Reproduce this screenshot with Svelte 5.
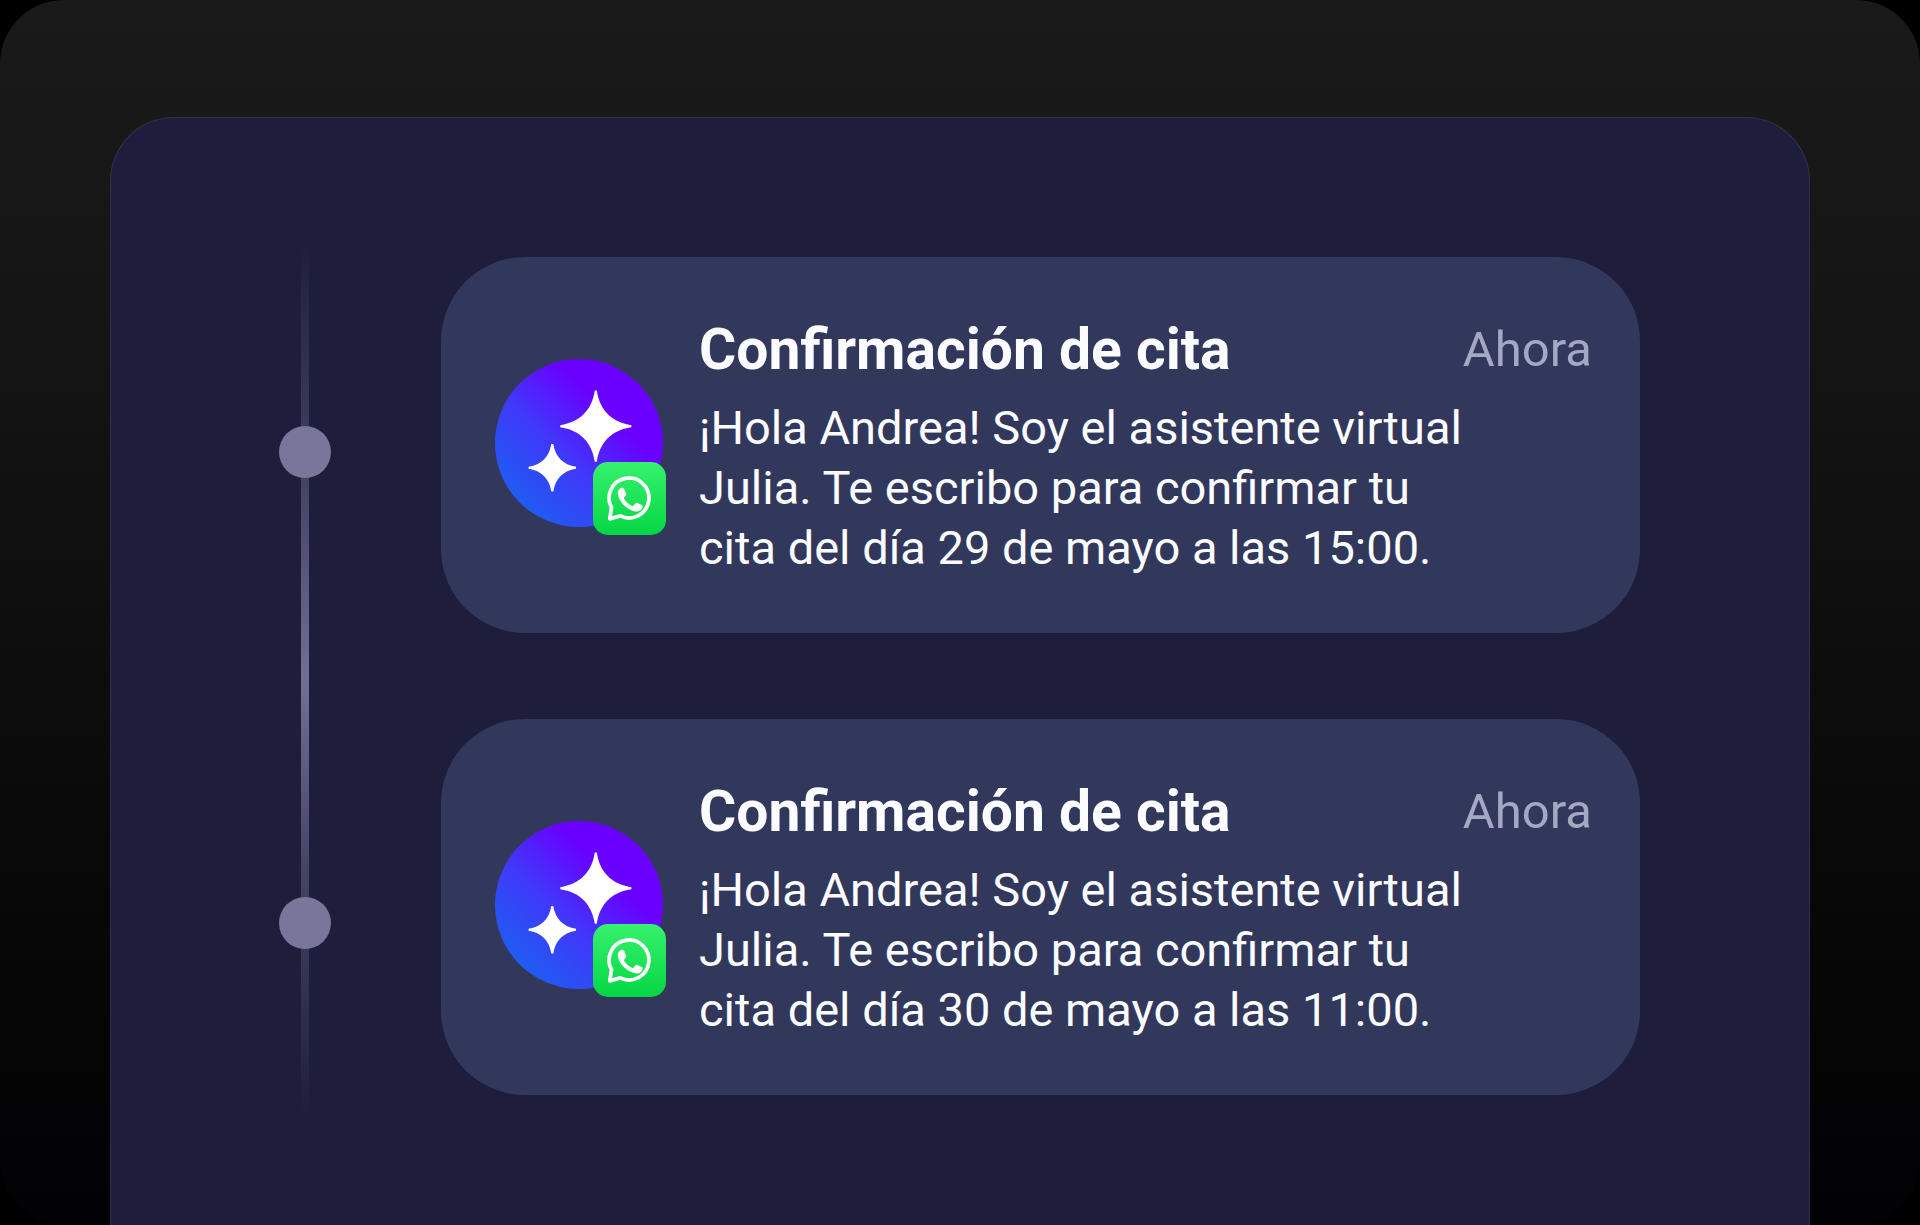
<script>
    const messages = [
        {
            title: "Confirmación de cita",
            time: "Ahora",
            body: "¡Hola Andrea! Soy el asistente virtual Julia. Te escribo para confirmar tu cita del día 29 de mayo a las 15:00.",
        },
        {
            title: "Confirmación de cita",
            time: "Ahora",
            body: "¡Hola Andrea! Soy el asistente virtual Julia. Te escribo para confirmar tu cita del día 30 de mayo a las 11:00.",
        },
    ];
</script>

<div class="backdrop">
    <main class="panel">
        <div class="timeline" aria-hidden="true">
            {#each messages as _}
                <span class="dot"></span>
            {/each}
        </div>

        <div class="messages">
            {#each messages as message}
                <article class="card">
                    <div class="avatar">
                        <svg viewBox="0 0 170 170" fill="#fff">
                            <path
                                d="M101 32h2C106 52 118 64 138 67v2C118 72 106 84 103 104h-2C98 84 86 72 66 69v-2C86 64 98 52 101 32z"
                            />
                            <path
                                d="M57 86h2C61 99 69 107 82 109v2C69 113 61 121 59 134h-2C55 121 47 113 34 111v-2C47 107 55 99 57 86z"
                            />
                        </svg>
                        <span class="badge">
                            <svg viewBox="0 0 74 74" role="img" aria-label="WhatsApp">
                                <path
                                    d="M17 57.6l1.800-11.400a20.200 20.200 0 1 1 8.800 8.400z"
                                    fill="none"
                                    stroke="#fff"
                                    stroke-width="3.8"
                                    stroke-linejoin="round"
                                />
                                <path
                                    d="M28.6 26.2h1.4c.8 0 1.3.4 1.6 1.1l2 4.8c.3.7.1 1.3-.3 1.8l-1.6 2c-.4.5-.4.9-.1 1.4 1.9 3.3 4.7 5.7 8.2 7.2.6.3 1 .2 1.4-.3l1.9-2.4c.5-.6 1-.7 1.7-.4l4.6 2.2c.7.3 1 .7.9 1.5-.2 3.4-3.200 5.200-6.200 5.100-8.800-.6-18-9.500-19-17.700-.2-2.600 1-5 3.500-6.300z"
                                    fill="#fff"
                                />
                            </svg>
                        </span>
                    </div>
                    <div class="text">
                        <header>
                            <h2>{message.title}</h2>
                            <time>{message.time}</time>
                        </header>
                        <p>{message.body}</p>
                    </div>
                </article>
            {/each}
        </div>
    </main>
</div>

<style>
    :global(body) {
        background: #000;
        font-family: Roboto, "Liberation Sans", sans-serif;
    }

    .backdrop {
        box-sizing: border-box;
        display: flex;
        min-height: 100vh;
        padding: 117px 110px 0;
        border-radius: 64px;
        background: linear-gradient(#1a1a1a, #141414 30%, #060607 80%, #020204);
    }

    .panel {
        flex: 1;
        display: grid;
        grid-template-columns: 52px 1fr;
        column-gap: 110px;
        align-items: start;
        padding: 127px 169px 112px 168px;
        border: 1px solid #30304a;
        border-bottom: none;
        border-radius: 64px 64px 0 0;
        background: #1e1e3c;
    }

    .timeline {
        align-self: stretch;
        display: flex;
        flex-direction: column;
        justify-content: space-between;
        box-sizing: border-box;
        padding: 181px 0 164px;
        background: linear-gradient(
                transparent,
                #444467 28%,
                #706f95 50%,
                #444467 72%,
                transparent
            )
            center / 8px 100% no-repeat;
    }

    .dot {
        height: 52px;
        border-radius: 50%;
        background: #78769a;
    }

    .messages {
        display: grid;
        gap: 86px;
        padding: 12px 0 16px;
    }

    .card {
        display: flex;
        align-items: flex-start;
        gap: 36px;
        padding: 61px 48px 55px 54px;
        border-radius: 84px;
        background: #32375c;
    }

    .avatar {
        position: relative;
        flex: none;
        width: 168px;
        height: 168px;
        margin-top: 41px;
        border-radius: 50%;
        background: linear-gradient(45deg, #1a62f0 10%, #4038fa 42%, #6a00ff 68%);
    }

    .badge {
        position: absolute;
        right: -3px;
        bottom: -8px;
        width: 73px;
        height: 73px;
        border-radius: 15px;
        background: linear-gradient(#36f26c, #05d644);
    }

    svg {
        display: block;
    }

    .text {
        flex: 1;
        color: #fafcff;
    }

    header {
        display: flex;
        justify-content: space-between;
        margin-bottom: 16px;
        line-height: 64px;
    }

    h2 {
        margin: 0;
        font-size: 57px;
        font-weight: 700;
    }

    time {
        color: #a5a8c3;
        font-size: 49px;
    }

    p {
        max-width: 780px;
        margin: 0;
        font-size: 47px;
        line-height: 60px;
    }
</style>
